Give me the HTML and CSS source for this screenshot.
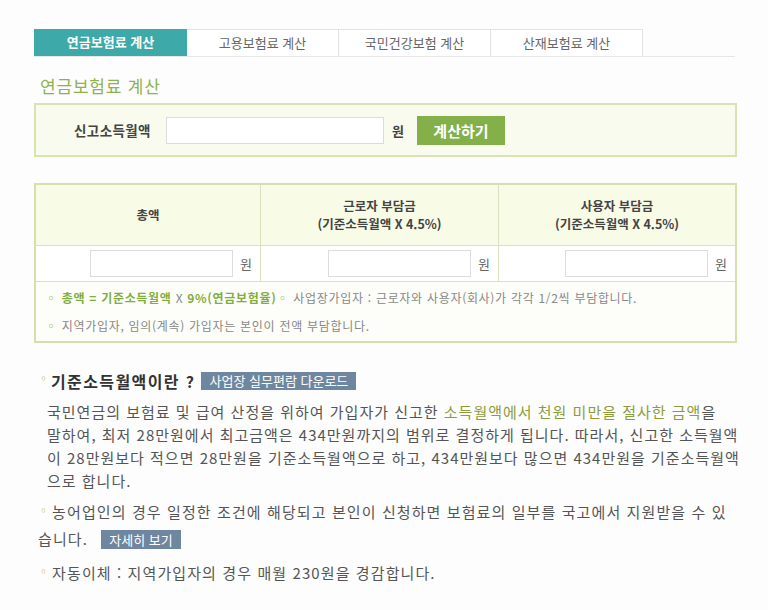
FILE: index.html
```html
<!DOCTYPE html>
<html lang="ko">
<head>
<meta charset="utf-8">
<title>연금보험료 계산</title>
<link rel="stylesheet" href="styles.css">
</head>
<body>
<div class="page">
  <div class="tabs">
    <div class="tab active">연금보험료 계산</div>
    <div class="tab">고용보험료 계산</div>
    <div class="tab">국민건강보험 계산</div>
    <div class="tab">산재보험료 계산</div>
  </div>

  <h2 class="title">연금보험료 계산</h2>

  <div class="searchbox">
    <span class="label">신고소득월액</span>
    <span class="field big"></span>
    <span class="won">원</span>
    <span class="calc-btn">계산하기</span>
  </div>

  <div class="result">
    <div class="grid">
      <div class="head">총액</div>
      <div class="head">근로자 부담금<br>(기준소득월액 X 4.5%)</div>
      <div class="head last">사용자 부담금<br>(기준소득월액 X 4.5%)</div>
      <div class="cell"><span class="field"></span><span class="unit">원</span></div>
      <div class="cell"><span class="field"></span><span class="unit">원</span></div>
      <div class="cell last"><span class="field"></span><span class="unit">원</span></div>
    </div>
    <div class="notes">
      <p><span class="dot">◦</span> <span class="hl">총액 = 기준소득월액</span> X <span class="hl">9%(연금보험율)</span><span class="dot">◦</span> 사업장가입자 : 근로자와 사용자(회사)가 각각 1/2씩 부담합니다.</p>
      <p><span class="dot">◦</span> 지역가입자, 임의(계속) 가입자는 본인이 전액 부담합니다.</p>
    </div>
  </div>

  <div class="info">
    <div class="info-title"><span class="sdot">◦</span><span class="it">기준소득월액이란 ?</span><span class="tag">사업장 실무편람 다운로드</span></div>
    <p class="desc">국민연금의 보험료 및 급여 산정을 위하여 가입자가 신고한 <span class="olive">소득월액에서 천원 미만을 절사한 금액</span>을<br>말하여, 최저 28만원에서 최고금액은 434만원까지의 범위로 결정하게 됩니다. 따라서, 신고한 소득월액<br>이 28만원보다 적으면 28만원을 기준소득월액으로 하고, 434만원보다 많으면 434만원을 기준소득월액<br>으로 합니다.</p>
    <p class="bullet"><span class="sdot">◦</span>농어업인의 경우 일정한 조건에 해당되고 본인이 신청하면 보험료의 일부를 국고에서 지원받을 수 있<br>습니다. <span class="tag small">자세히 보기</span></p>
    <p class="bullet last"><span class="sdot">◦</span>자동이체 : 지역가입자의 경우 매월 230원을 경감합니다.</p>
  </div>
</div>
</body>
</html>
```

FILE: styles.css
```css
html, body {
  margin: 0;
  padding: 0;
  background: #fdfdfd;
}
body {
  font-family: "Noto Sans CJK KR", "Noto Sans", sans-serif;
  color: #555;
}
.page {
  width: 703px;
  margin-left: 34px;
  padding-top: 29px;
}
.tabs {
  display: flex;
  border-bottom: 1px solid #e6e6e6;
  width: 701px;
  height: 27px;
}
.tab {
  width: 152px;
  box-sizing: border-box;
  border: 1px solid #e2e2e2;
  border-left: none;
  border-bottom: none;
  background: #fff;
  font-size: 13px;
  color: #666;
  text-align: center;
  line-height: 26px;
}
.tab.active {
  width: 153px;
  background: #3ea9a9;
  color: #fff;
  font-weight: bold;
  border: none;
}
.title {
  margin: 17px 0 0 6px;
  font-size: 17px;
  font-weight: normal;
  color: #8db24f;
  line-height: 24px;
  height: 24px;
  letter-spacing: 0.8px;
}
.searchbox {
  margin-top: 5px;
  height: 54px;
  box-sizing: border-box;
  border: 2px solid #d8e3b2;
  background: #f8fbee;
  display: flex;
  align-items: center;
  padding-left: 38px;
}
.label {
  font-size: 13.5px;
  font-weight: bold;
  color: #444;
  width: 92px;
  letter-spacing: 0.4px;
}
.field {
  display: inline-block;
  background: #fff;
  border: 1px solid #dcdcdc;
  box-sizing: border-box;
  width: 143px;
  height: 27px;
}
.field.big {
  width: 218px;
}
.won {
  font-size: 13px;
  font-weight: bold;
  color: #444;
  margin-left: 8px;
}
.calc-btn {
  margin-left: 13px;
  width: 88px;
  height: 29px;
  background: #84b04a;
  color: #fff;
  font-weight: bold;
  font-size: 15px;
  text-align: center;
  line-height: 29px;
}
.result {
  margin-top: 26px;
  border: 2px solid #d5e0ad;
  background: #fdfef9;
  height: 160px;
  box-sizing: border-box;
}
.grid {
  display: grid;
  grid-template-columns: 225px 238px 236px;
  grid-template-rows: 61px 36px;
}
.head {
  background: #f8fbe6;
  border-right: 1px solid #d9e2bc;
  border-bottom: 1px solid #d9e2bc;
  font-size: 12.5px;
  font-weight: bold;
  color: #444;
  line-height: 18px;
  display: flex;
  align-items: center;
  justify-content: center;
  text-align: center;
}
.cell {
  background: #fff;
  border-right: 1px solid #d9e2bc;
  border-bottom: 1px solid #d9e2bc;
  display: flex;
  align-items: center;
  justify-content: flex-end;
  padding-right: 8px;
}
.head.last, .cell.last {
  border-right: none;
}
.unit {
  font-size: 13px;
  color: #666;
  margin-left: 7px;
}
.notes {
  padding: 2px 0 0 9px;
}
.notes p {
  margin: 0;
  font-size: 12px;
  line-height: 28px;
  color: #888;
  letter-spacing: 0.7px;
}
.dot {
  color: #9cc35e;
}
.hl {
  color: #7fae3f;
  font-weight: bold;
}
.info {
  margin-top: 28px;
  padding-left: 4px;
}
.info-title {
  display: flex;
  align-items: center;
  height: 19px;
}
.sdot {
  color: #c8b860;
  font-size: 11px;
  margin-right: 2px;
  position: relative;
  top: -3px;
}
.it {
  font-size: 16px;
  font-weight: bold;
  color: #333;
  letter-spacing: 1.4px;
}
.tag {
  display: inline-block;
  background: #6f86a0;
  color: #fff;
  font-size: 13px;
  font-weight: normal;
  line-height: 18px;
  padding: 0 8px;
  margin-left: 6px;
  letter-spacing: 0;
}
.tag.small {
  padding: 0 8px;
  line-height: 19px;
  margin-left: 8px;
}
.desc {
  margin: 10px 0 0 9px;
  font-size: 15px;
  line-height: 23px;
  color: #555;
  letter-spacing: 1px;
  white-space: nowrap;
}
.olive {
  color: #8c9c3c;
}
.bullet {
  margin: 7px 0 0 0;
  font-size: 15px;
  line-height: 25px;
  color: #555;
  letter-spacing: 1.1px;
  white-space: nowrap;
}
.bullet.last {
  margin-top: 9px;
}
```
